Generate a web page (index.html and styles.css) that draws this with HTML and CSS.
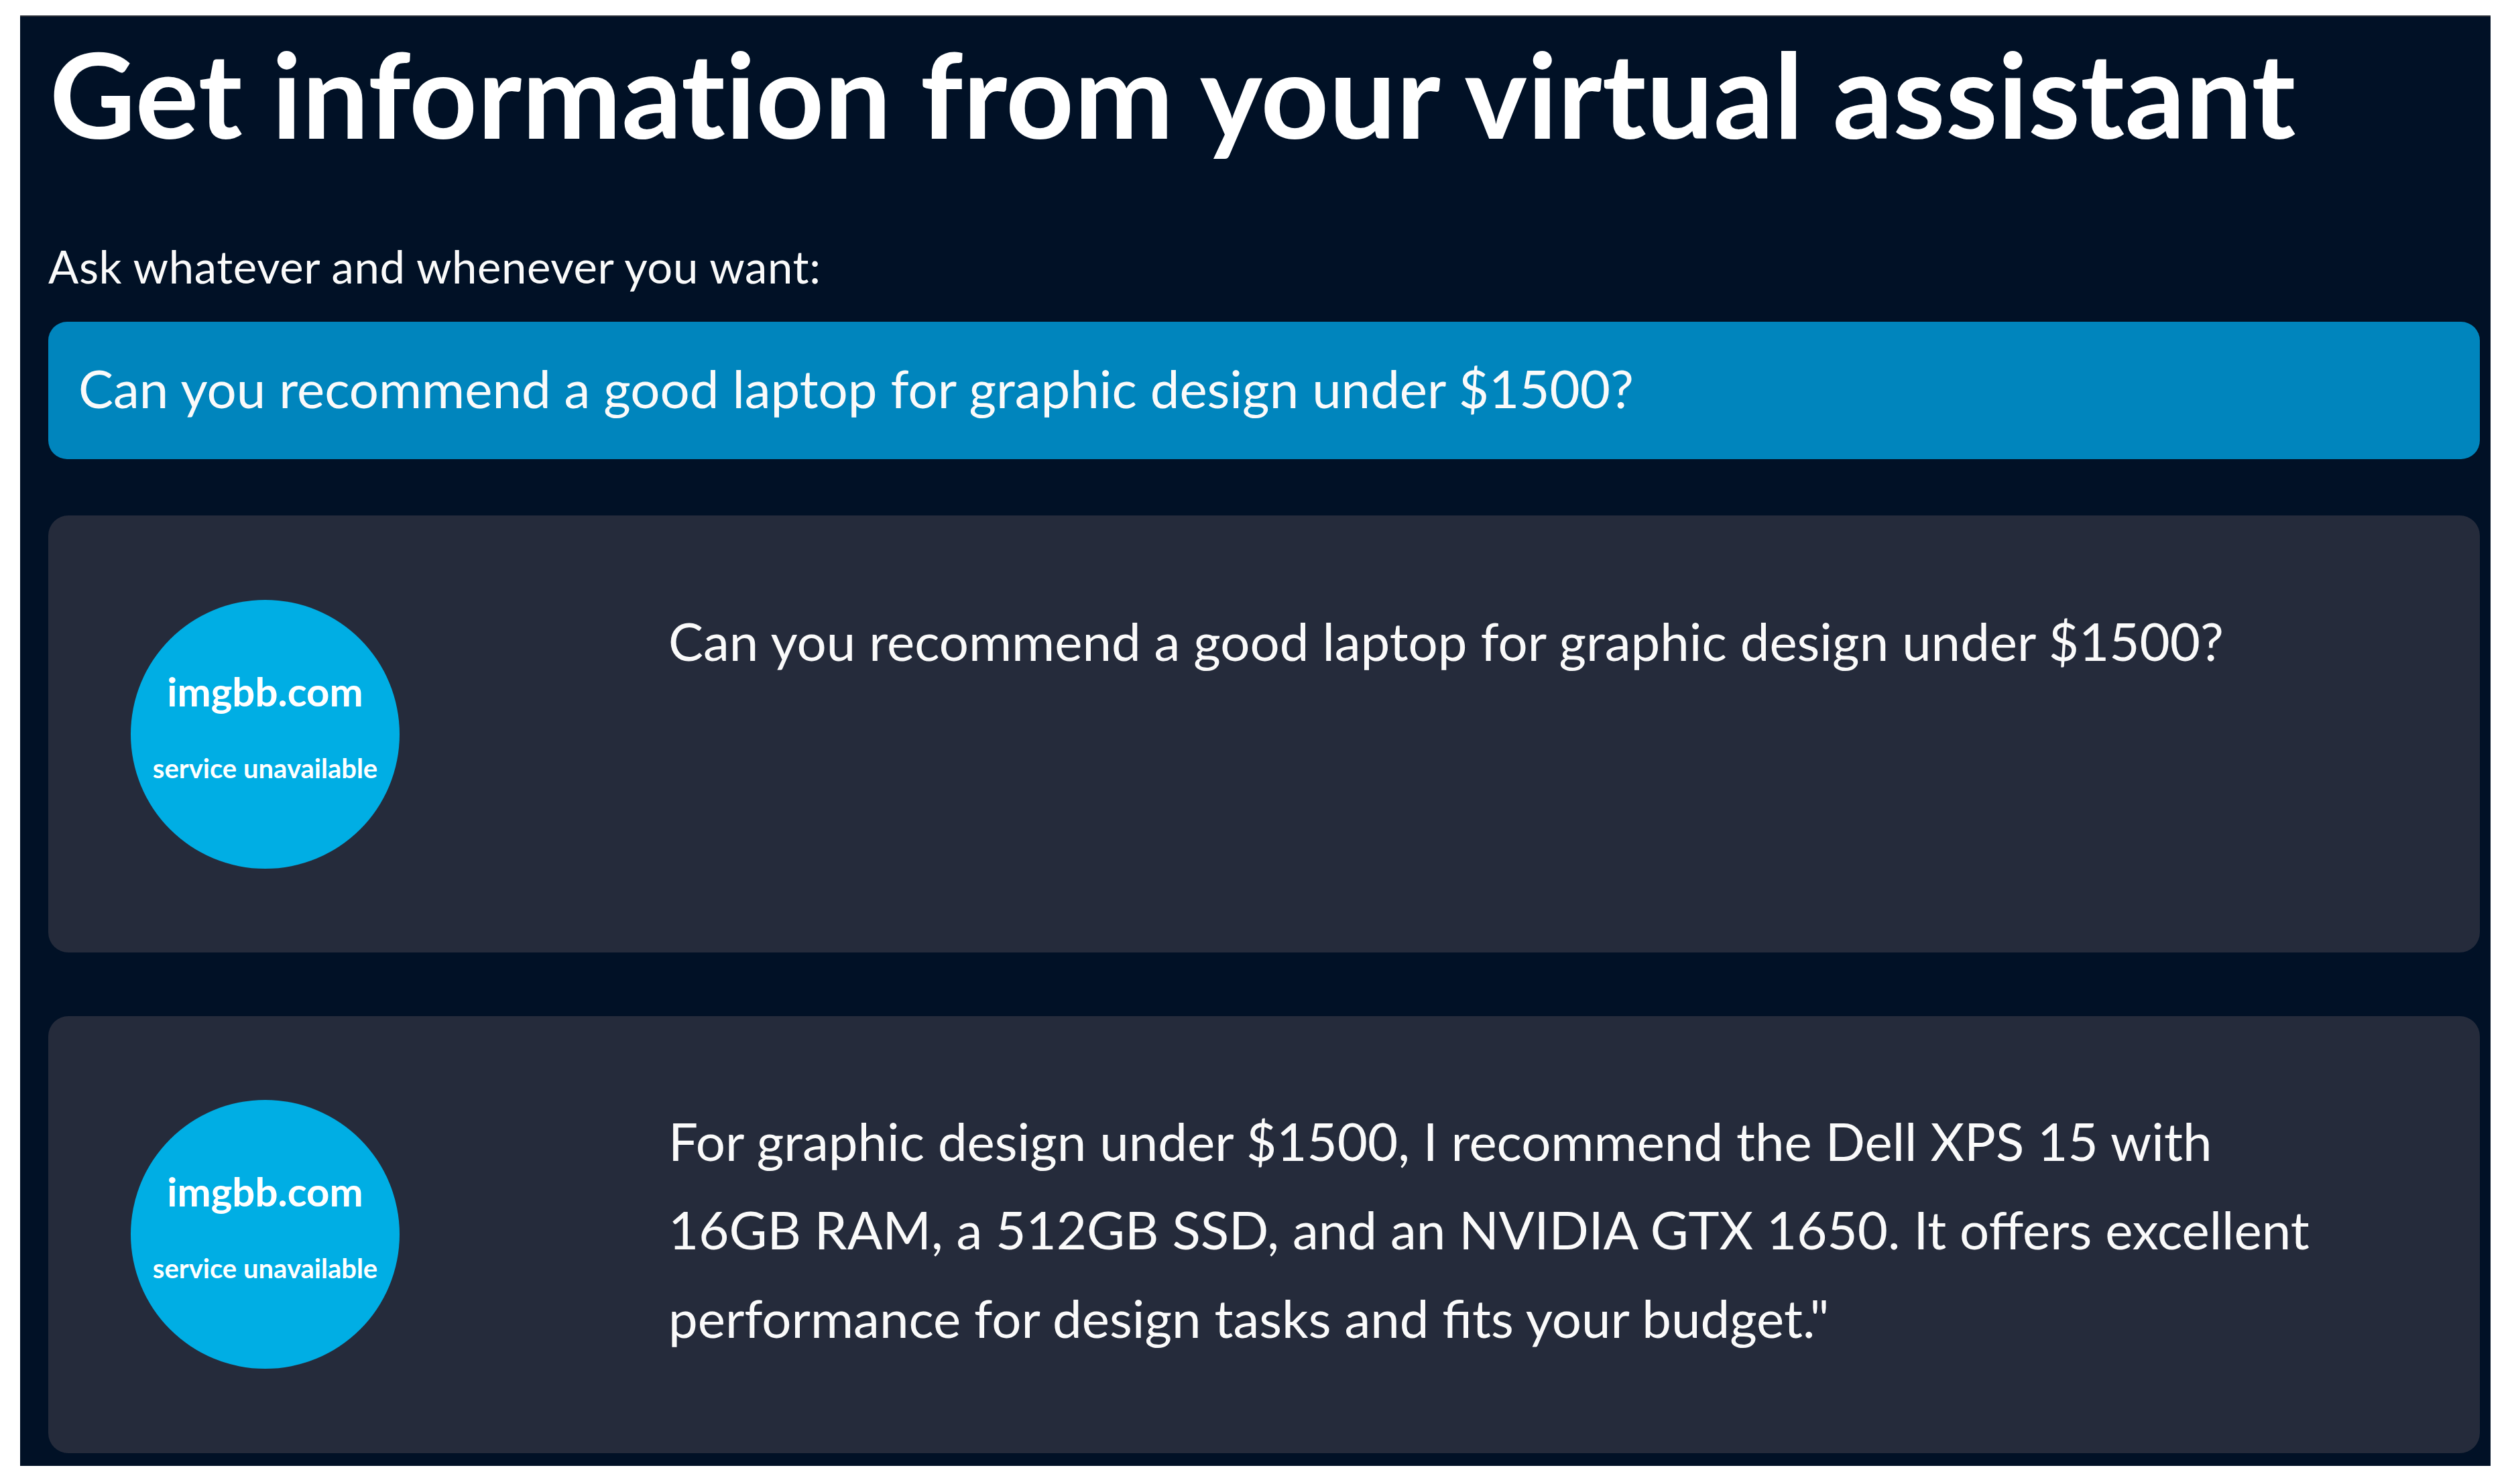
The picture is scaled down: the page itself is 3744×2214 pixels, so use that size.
FILE: index.html
```html
<!DOCTYPE html>
<html lang="en">
<head>
<meta charset="utf-8">
<title>Virtual assistant</title>
<link rel="stylesheet" href="styles.css">
</head>
<body>
<main class="frame">
  <h1 class="title">Get information from your virtual assistant</h1>
  <label class="label" for="q">Ask whatever and whenever you want:</label>
  <div class="input" id="q">Can you recommend a good laptop for graphic design under $1500?</div>

  <section class="card card-user">
    <div class="avatar">
      <span class="avatar-main">imgbb.com</span>
      <span class="avatar-sub">service unavailable</span>
    </div>
    <p class="msg">Can you recommend a good laptop for graphic design under $1500?</p>
  </section>

  <section class="card card-bot">
    <div class="avatar">
      <span class="avatar-main">imgbb.com</span>
      <span class="avatar-sub">service unavailable</span>
    </div>
    <p class="msg">For graphic design under $1500, I recommend the Dell XPS 15 with 16GB RAM, a 512GB SSD, and an NVIDIA GTX 1650. It offers excellent performance for design tasks and fits your budget."</p>
  </section>
</main>
</body>
</html>
```

FILE: styles.css
```css
html, body {
  margin: 0;
  padding: 0;
  background: #ffffff;
}

body {
  width: 3744px;
  height: 2214px;
  overflow: hidden;
  font-family: "Lato", "Open Sans", sans-serif;
  color: #fafafa;
}

.frame {
  box-sizing: border-box;
  margin: 23px 0 0 30px;
  width: 3685px;
  height: 2164px;
  background: #011126;
  border-top: 2px solid #2a2f38;
  padding: 8px 16px 0 42px;
  display: flex;
  flex-direction: column;
}

.title {
  margin: 0 0 0 2px;
  font-size: 177px;
  line-height: 212px;
  font-weight: 700;
  letter-spacing: 0.3px;
  color: #ffffff;
}

.label {
  display: block;
  margin-top: 112px;
  font-size: 67px;
  line-height: 80px;
  font-weight: 400;
  letter-spacing: 0.6px;
  color: #fafafa;
}

.input {
  box-sizing: border-box;
  margin-top: 43px;
  height: 205px;
  padding: 52px 45px 0;
  background: #0085bd;
  border-radius: 28px;
  font-size: 78px;
  line-height: 94px;
  color: #fafafa;
}

.card {
  box-sizing: border-box;
  height: 652px;
  background: #252b3b;
  border-radius: 30px;
  display: flex;
  align-items: flex-start;
  padding-left: 123px;
}

.card-user {
  margin-top: 84px;
  padding-top: 121px;
}

.card-bot {
  margin-top: 95px;
  padding-top: 120px;
}

.avatar {
  flex: 0 0 401px;
  width: 401px;
  height: 401px;
  margin-top: 5px;
  border-radius: 50%;
  background: #00aee4;
  display: flex;
  flex-direction: column;
  align-items: center;
  color: #ffffff;
  font-weight: 700;
}

.avatar-main {
  margin-top: 100px;
  font-size: 60px;
  line-height: 72px;
}

.avatar-sub {
  margin-top: 55px;
  font-size: 40px;
  line-height: 48px;
}

.msg {
  flex: 0 0 auto;
  margin: 0 0 0 401px;
  width: 2480px;
  font-size: 78px;
  line-height: 132px;
  color: #fafafa;
}
```
